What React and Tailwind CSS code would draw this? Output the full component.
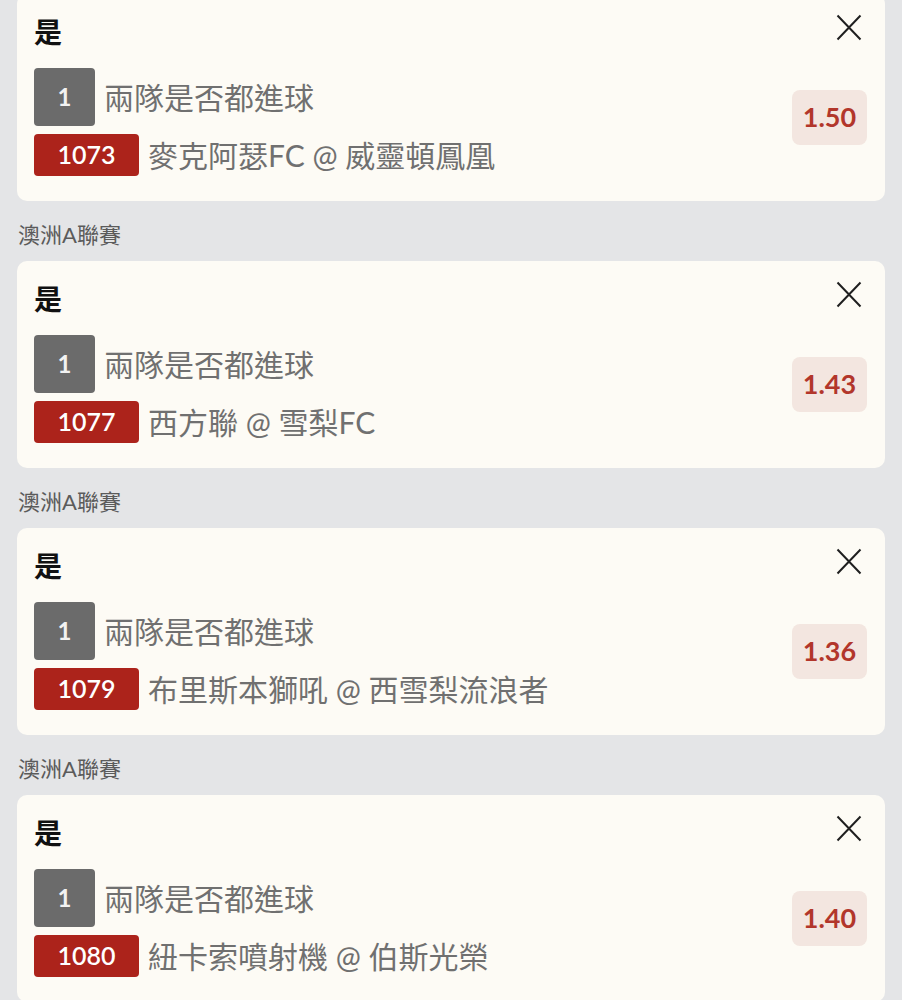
import React from "react";

const bets = [
  { no: "1073", match: "麥克阿瑟FC @ 威靈頓鳳凰", odds: "1.50" },
  { no: "1077", match: "西方聯 @ 雪梨FC", odds: "1.43" },
  { no: "1079", match: "布里斯本獅吼 @ 西雪梨流浪者", odds: "1.36" },
  { no: "1080", match: "紐卡索噴射機 @ 伯斯光榮", odds: "1.40" },
];

const font = { fontFamily: '"Lato", "Noto Sans CJK TC", sans-serif' };

const CloseIcon = () => (
  <svg width="26" height="27" viewBox="0 0 26 27" className="mr-[5px] shrink-0">
    <path d="M1.5 1.5 L24.5 25.5 M24.5 1.5 L1.5 25.5" stroke="#1f1f1f" strokeWidth="2" fill="none" />
  </svg>
);

const BetCard = ({ bet }) => (
  <div className="mx-[17px] h-[207px] rounded-[10px] bg-[#fdfbf5] pl-[17px] pr-[18px] pt-[20px]">
    <div className="flex items-start justify-between">
      <span className="text-[28px] leading-[36px] font-bold text-[#111]">是</span>
      <CloseIcon />
    </div>
    <div className="mt-[18px] flex items-center justify-between">
      <div className="flex flex-col gap-[8px]">
        <div className="flex items-center gap-[9px]">
          <div className="flex h-[58px] w-[61px] items-center justify-center rounded-[4px] bg-[#6b6b6b] text-[24px] font-bold text-[#f2f2f2]">
            1
          </div>
          <span className="text-[30px] leading-[40px] text-[#707070]">兩隊是否都進球</span>
        </div>
        <div className="flex items-center gap-[9px]">
          <div className="flex h-[42px] w-[105px] items-center justify-center rounded-[4px] bg-[#ac231b] text-[25px] font-semibold text-white">
            {bet.no}
          </div>
          <span className="text-[30px] leading-[40px] text-[#707070]">{bet.match}</span>
        </div>
      </div>
      <div className="mb-[9px] flex h-[55px] w-[75px] items-center justify-center rounded-[8px] bg-[#f3e6e0] text-[27px] font-bold text-[#b2362b]">
        {bet.odds}
      </div>
    </div>
  </div>
);

export default function App() {
  return (
    <div className="min-h-[1000px] bg-[#e4e5e7] overflow-hidden" style={font}>
      <div className="-mt-[6px]">
        {bets.map((bet, i) => (
          <div key={bet.no}>
            {i > 0 && (
              <div className="pl-[18px] pt-[19px] pb-[11px] text-[22px] leading-[30px] text-[#5b5b5b]">
                澳洲A聯賽
              </div>
            )}
            <BetCard bet={bet} />
          </div>
        ))}
      </div>
    </div>
  );
}
